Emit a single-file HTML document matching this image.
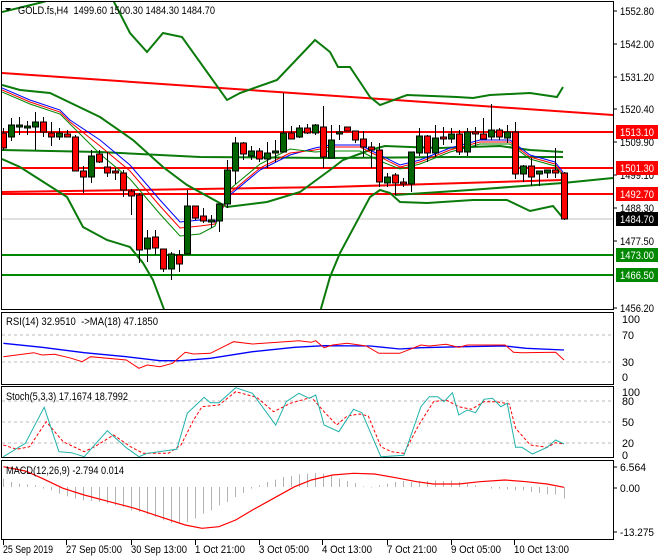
<!DOCTYPE html>
<html><head><meta charset="utf-8"><style>
html,body{margin:0;padding:0;background:#fff;width:660px;height:560px;overflow:hidden}
svg{display:block;font-family:"Liberation Sans",sans-serif;font-size:11px}
</style></head><body>
<svg id="s" width="660" height="560" xmlns="http://www.w3.org/2000/svg"></svg>
<script>
var o=[];
function P(pts,c,w,ex){o.push('<polyline fill="none" stroke="'+c+'" stroke-width="'+w+'" '+(ex||'')+' points="'+pts.map(function(p){return p[0]+','+p[1]}).join(' ')+'"/>');}
function L(x1,y1,x2,y2,c,w,ex){o.push('<line x1="'+x1+'" y1="'+y1+'" x2="'+x2+'" y2="'+y2+'" stroke="'+c+'" stroke-width="'+(w||1)+'" '+(ex||'')+'/>');}
function T(x,y,t,c,tl){o.push('<text x="'+x+'" y="'+y+'" fill="'+(c||'#000')+'"'+(tl?' textLength="'+tl+'" lengthAdjust="spacingAndGlyphs"':'')+'>'+t+'</text>');}
function Z(arr){return arr.map(function(p){return [+(p[0]/2.376).toFixed(1),+(p[1]/3+310).toFixed(1)]});}
o.push('<rect width="660" height="560" fill="#fff"/>');
o.push('<clipPath id="cm"><rect x="2" y="2" width="611" height="307"/></clipPath><g clip-path="url(#cm)">');
L(2,219,613,219,'#c0c0c0',1);
L(2,73,613,115,'#f00',2);
P([[2,192],[330,187],[563,180]],'#f00',2);
L(2,132,613,132,'#f00',2);L(2,168,613,168,'#f00',2);L(2,194,613,194,'#f00',2);
L(2,255,613,255,'#080',2);L(2,275,613,275,'#080',2);
var G='#0a7a0a';
P([[2,12],[43,2],[80,-10]],G,2);
P([[108,-5],[113,0],[130,33],[147,52],[163,33],[182,37],[227,100],[240,93],[277,80],[315,40],[330,52],[338,67],[350,67],[370,97],[380,105],[407,95],[457,97],[473,98],[490,95],[530,93],[557,97],[563,87]],G,2);
P([[2,85],[20,90],[50,93],[100,117],[133,140],[163,167],[187,185],[227,207],[267,202],[300,192],[330,170],[343,160],[370,150],[385,146],[410,147],[440,148],[470,147],[500,146],[530,150],[563,152]],G,2);
P([[2,150],[100,152],[200,157],[330,158],[450,157],[563,157]],G,2);
P([[2,159],[20,167],[67,197],[83,227],[107,240],[130,247],[143,263],[153,280],[165,312]],G,2);
P([[320,312],[330,277],[340,253],[370,197],[380,190],[390,193],[400,202],[427,203],[473,200],[507,200],[530,211],[553,206],[563,218]],G,2);
P([[395,195],[470,190],[563,183],[613,178]],G,2);
var B=[[2,88],[30,100],[60,110],[70,120],[100,140],[130,165],[160,200],[180,222],[200,220],[215,222],[230,195],[260,170],[290,155],[315,148],[330,145],[360,145],[380,155],[400,165],[420,160],[450,148],[480,140],[510,140],[530,155],[555,162],[563,172]];
P(B,'#00f',1);
P(B.map(function(p,i){return [p[0],p[1]+(i>3&&i<8?6:i==8?6:2)-(i>9&&i<13?4:0)]}),'#f00',1);
P(B.map(function(p,i){return [p[0],p[1]+(i>3&&i<9?14:4)-(i>9&&i<13?10:0)-(i>13&&i<17?-2:0)]}),'#080',1);
var C=[[133,148,128,150,0],[125,137,118,141,1],[125,127,117,135,1],[126,127,121,135,1],[122,127,112,150,1],[122,132,117,137,0],[133,137,122,146,0],[133,137,128,140,1],[134,137,130,137,0],[137,171,135,171,0],[171,177,166,193,0],[156,177,150,183,1],[154,162,150,163,0],[167,173,152,177,0],[171,173,168,180,0],[173,190,170,197,0],[191,196,189,215,0],[195,250,193,263,0],[238,249,230,262,1],[237,248,230,255,0],[249,269,249,272,0],[254,269,252,280,1],[255,264,250,272,0],[206,254,190,254,1],[206,218,206,220,0],[216,221,208,223,0],[220,222,215,228,1],[204,221,204,232,1],[170,204,160,208,1],[143,171,137,184,1],[143,154,142,160,0],[151,156,146,160,1],[151,159,148,162,0],[153,159,142,168,1],[151,153,140,162,1],[133,152,93,152,1],[133,139,126,139,0],[128,137,125,138,1],[128,133,124,134,0],[125,133,124,135,1],[127,157,106,168,0],[140,158,125,158,1],[132,134,125,140,1],[127,131,127,131,0],[131,140,131,143,0],[139,147,131,157,0],[147,150,142,168,0],[150,182,143,187,0],[177,183,173,187,1],[175,183,173,195,0],[182,184,178,187,0],[152,184,152,192,1],[136,153,128,156,1],[136,153,135,162,0],[138,153,125,157,1],[137,139,127,145,0],[134,139,128,143,1],[134,152,130,155,0],[132,152,128,156,1],[132,134,127,147,0],[134,139,118,139,0],[130,137,104,140,1],[130,137,128,140,0],[132,138,125,143,1],[132,174,122,179,0],[166,174,165,182,1],[166,177,158,186,0],[171,174,171,186,1],[170,173,170,178,1],[170,173,148,178,0],[173,219,172,220,0]];
C.forEach(function(c,i){var x=3+i*8;if(i==70)x=564;
L(x+0.5,c[2],x+0.5,c[3],'#000',1);
var h=Math.max(c[1]-c[0],2);
o.push('<rect x="'+(x-2.5)+'" y="'+c[0]+'" width="6" height="'+h+'" fill="'+(c[4]?'#006400':'#f00')+'" stroke="#000" stroke-width="1"/>');});
o.push('</g>');
o.push('<rect x="1.5" y="1.5" width="612" height="308" fill="none" stroke="#000"/>');
o.push('<rect x="1.5" y="312.5" width="612" height="72" fill="none" stroke="#000"/>');
o.push('<rect x="1.5" y="386.5" width="612" height="71" fill="none" stroke="#000"/>');
o.push('<rect x="1.5" y="460.5" width="612" height="79" fill="none" stroke="#000"/>');
o.push('<polygon points="5,8 11,8 8,11" fill="#000"/>');
T(18,14,'GOLD.fs,H4&#160;&#160;1499.60 1500.30 1484.30 1484.70','#000',197);
[['1552.80',11],['1542.00',44],['1531.20',77],['1520.40',109],['1509.90',142],['1499.10',175],['1488.30',208],['1477.50',241],['1456.20',308]].forEach(function(a){L(613,a[1],617,a[1],'#000');T(620,a[1]+4,a[0],'#000',34);});
[['1513.10',132,'#f00','#fff'],['1501.30',168,'#f00','#fff'],['1492.70',194,'#f00','#fff'],['1484.70',219,'#000','#fff'],['1473.00',255,'#080','#fff'],['1466.50',275,'#080','#fff']].forEach(function(a){o.push('<rect x="616" y="'+(a[1]-7)+'" width="42" height="14" fill="'+a[2]+'"/>');T(620,a[1]+4,a[0],a[3],34);});
L(2,335,613,335,'#bbb',1,'stroke-dasharray="3,3"');L(2,362,613,362,'#bbb',1,'stroke-dasharray="3,3"');
P(Z([[8,100],[100,112],[200,128],[300,140],[380,152],[430,152],[500,145],[600,125],[700,112],[770,107],[880,108],[950,117],[1000,113],[1100,110],[1200,108],[1250,115],[1340,120]]),'#00f',1.3);
P(Z([[8,140],[80,128],[100,135],[130,133],[170,145],[195,155],[215,140],[300,150],[330,175],[350,165],[380,170],[410,160],[440,127],[460,132],[500,130],[555,95],[600,102],[660,97],[710,92],[740,97],[750,92],[770,113],[790,105],[825,100],[870,108],[900,130],[950,130],[1000,105],[1020,108],[1060,103],[1090,112],[1110,105],[1200,105],[1220,127],[1240,128],[1320,127],[1340,150]]),'#f00',1);
T(6,325,'RSI(14) 32.9510&#160;&#160;-&gt;MA(18) 47.1850','#000',152);
[['100',319,18],['70',335,12],['30',362,12],['0',377,6]].forEach(function(a){T(622,a[1]+4,a[0],'#000',a[2]);});
[401,422,443].forEach(function(y){L(2,y,613,y,'#bbb',1,'stroke-dasharray="3,3"');});
P(Z([[8,405],[40,418],[70,410],[110,335],[150,395],[200,425],[225,410],[270,375],[310,410],[340,430],[400,430],[430,405],[460,330],[480,290],[520,285],[560,245],[610,262],[650,305],[690,280],[740,262],[770,305],[800,345],[825,318],[855,312],[875,318],[905,410],[930,425],[960,430],[995,345],[1030,275],[1060,270],[1090,290],[1120,298],[1150,275],[1180,275],[1210,282],[1225,355],[1260,405],[1300,412],[1320,398],[1340,402]]),'#f00',1,'stroke-dasharray="3,2"');
P(Z([[8,440],[60,400],[105,292],[140,425],[170,428],[200,440],[255,362],[300,413],[330,440],[350,430],[420,418],[445,310],[485,262],[500,278],[520,278],[560,233],[600,250],[655,345],[680,275],[710,250],[735,265],[750,255],[770,345],[805,365],[840,298],[860,308],[905,440],[960,436],[1000,290],[1020,260],[1040,260],[1055,275],[1075,248],[1090,315],[1110,300],[1130,308],[1150,268],[1170,265],[1190,290],[1205,280],[1225,412],[1240,412],[1265,432],[1300,412],[1320,390],[1340,402]]),'#20b2aa',1);
T(6,400,'Stoch(5,3,3) 17.1674 18.7992','#000',122);
[['100',392,18],['80',401,12],['50',422,12],['20',443,12],['0',455,6]].forEach(function(a){T(622,a[1]+4,a[0],'#000',a[2]);});
var H=[505,515,520,522,525,535,540,550,558,565,570,572,575,580,585,590,600,605,612,620,630,638,640,635,625,610,600,585,575,560,548,535,525,515,508,500,497,492,490,488,490,495,505,512,518,528,532,525,520,515,512,515,512,512,510,512,510,515,520,525,530,535,535,537,540,540,545,548,552,553,565];
H.forEach(function(v,i){var x=3.5+i*8;if(i==70)x=564.5;L(x,487,x,487+(v-530)/3,'#b4b4b4',1);});
P(Z([[8,470],[60,483],[100,505],[150,535],[200,555],[260,575],[320,595],[380,620],[440,645],[480,655],[520,650],[560,630],[600,600],[650,565],[700,530],[740,510],[790,495],[840,490],[890,492],[940,503],[990,515],[1030,522],[1090,522],[1140,515],[1200,510],[1250,515],[1300,522],[1340,532]]),'#f00',1.2);
T(6,474,'MACD(12,26,9) -2.794 0.014','#000',118);
[['6.564',467,26],['0.00',488,20],['-13.275',532,34]].forEach(function(a){L(613,a[1],617,a[1],'#000');T(620,a[1]+4,a[0],'#000',a[2]);});
[['25 Sep 2019',3,50],['27 Sep 05:00',66,56],['30 Sep 13:00',131,56],['1 Oct 21:00',195,50],['3 Oct 05:00',259,50],['4 Oct 13:00',322,50],['7 Oct 21:00',387,50],['9 Oct 05:00',451,50],['10 Oct 13:00',514,55]].forEach(function(a){L(a[1]+0.5,540,a[1]+0.5,545,'#000');T(a[1],553,a[0],'#000',a[2]);});
document.getElementById('s').innerHTML=o.join('');
</script>
</body></html>
